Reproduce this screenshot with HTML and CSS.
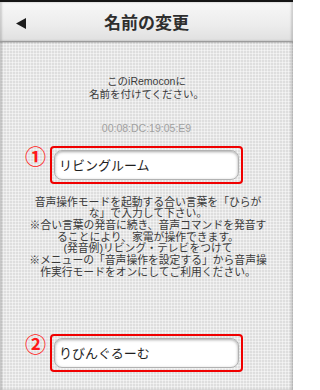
FILE: index.html
```html
<!DOCTYPE html>
<html lang="ja">
<head>
<meta charset="utf-8">
<title>名前の変更</title>
<link rel="stylesheet" href="styles.css">
</head>
<body>
<div class="screen">
  <header class="header">
    <svg class="back" width="10" height="11" viewBox="0 0 10 11"><polygon points="0,5.5 10,0 10,11" fill="#1c1c1c"/></svg>
    <h1 class="title">名前の変更</h1>
  </header>
  <p class="intro">このiRemoconに<br>名前を付けてください。</p>
  <p class="mac">00:08:DC:19:05:E9</p>
  <div class="field-row first">
    <span class="num">①</span>
    <div class="frame"><div class="input">リビングルーム</div></div>
  </div>
  <p class="desc">音声操作モードを起動する合い言葉を「ひらが<br>な」で入力して下さい。<br>※合い言葉の発音に続き、音声コマンドを発音す<br>ることにより、家電が操作できます。<br>(発音例)リビング・テレビをつけて<br>※メニューの「音声操作を設定する」から音声操<br>作実行モードをオンにしてご利用ください。</p>
  <div class="field-row second">
    <span class="num">②</span>
    <div class="frame"><div class="input">りびんぐるーむ</div></div>
  </div>
</div>
</body>
</html>
```
FILE: styles.css
```css
html, body {
  margin: 0;
  padding: 0;
}
body {
  width: 293px;
  height: 390px;
  overflow: hidden;
  font-family: "Liberation Sans", "Noto Sans CJK JP", sans-serif;
}
.screen {
  width: 293px;
  height: 390px;
  display: flex;
  flex-direction: column;
  background-color: #dedede;
  background-image:
    repeating-linear-gradient(90deg, rgba(255,255,255,0.45) 0 1px, transparent 1px 3px),
    repeating-linear-gradient(0deg, rgba(255,255,255,0.45) 0 1px, transparent 1px 3px);
  box-shadow: inset 2px 0 2px rgba(0,0,0,0.18), inset -2px 0 2px rgba(0,0,0,0.18);
}
.header {
  box-sizing: border-box;
  height: 42px;
  flex: none;
  border-top: 2px solid #151515;
  border-bottom: 1px solid #9c9c9c;
  background: linear-gradient(#f7f7f7, #ececec 60%, #e0e0e0);
  box-shadow: inset 2px 0 2px rgba(0,0,0,0.15), inset -2px 0 2px rgba(0,0,0,0.15), 0 1px 1px rgba(0,0,0,0.15);
  display: flex;
  align-items: center;
  justify-content: center;
  position: relative;
}
.back {
  position: absolute;
  left: 16px;
  top: 16px;
}
.title {
  margin: 0;
  font-size: 17px;
  line-height: 20px;
  font-weight: bold;
  color: #2e2e2e;
  font-family: "Noto Sans CJK JP", sans-serif;
}
.intro {
  margin: 33px 0 0;
  text-align: center;
  font-size: 10.5px;
  line-height: 13px;
  color: #3a3a3a;
}
.mac {
  margin: 21px 0 0;
  text-align: center;
  font-size: 10.5px;
  line-height: 13px;
  color: #a0a0a0;
}
.field-row {
  display: flex;
  align-items: flex-start;
  padding-left: 25px;
}
.field-row.first {
  margin-top: 10.5px;
}
.field-row.second {
  margin-top: 56px;
}
.num {
  width: 21px;
  margin-right: 4px;
  margin-top: -1px;
  font-family: "Noto Sans CJK JP", sans-serif;
  font-size: 21px;
  font-weight: bold;
  line-height: 21px;
  color: #ff1a1a;
  text-align: center;
}
.frame {
  box-sizing: border-box;
  width: 193px;
  height: 38px;
  border: 2px solid #f00000;
  border-radius: 4px;
  padding: 2px;
}
.input {
  box-sizing: border-box;
  height: 30px;
  background: #fff;
  border: 1px solid #b2b2b2;
  border-radius: 8px;
  box-shadow: inset 0 1px 3px rgba(0,0,0,0.35);
  padding-left: 4px;
  font-size: 13px;
  line-height: 28px;
  color: #1e1e1e;
  font-family: "Noto Sans CJK JP", sans-serif;
}
.desc {
  margin: 13px 0 0;
  text-align: center;
  font-size: 10.8px;
  line-height: 11.7px;
  color: #3a3a3a;
  white-space: nowrap;
  padding-left: 3px;
}
```
